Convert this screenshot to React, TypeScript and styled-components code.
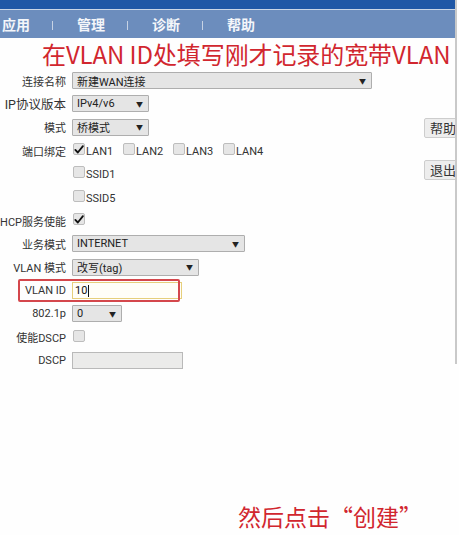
import React from "react";
import styled, { createGlobalStyle } from "styled-components";

const Global = createGlobalStyle`
  html, body { margin: 0; padding: 0; background: #fefefe; }
  body { font-family: "Roboto", "Noto Sans CJK SC", sans-serif; overflow: hidden; }
`;

const Page = styled.div`
  width: 459px;
  height: 535px;
  position: relative;
  overflow: hidden;
  background: #fefefe;
`;

const Frame = styled.div`
  width: 457px;
  height: 364px;
  box-sizing: border-box;
  border-right: 2px solid #c9c9c9;
  display: flex;
  flex-direction: column;
  & > * { flex-shrink: 0; }
`;

const TopStrip = styled.div`
  height: 9px;
  background: #1f57a6;
  border-bottom: 1px solid #c9d5e6;
`;

const Nav = styled.div`
  height: 28px;
  background: #6c8dbd;
  display: flex;
  align-items: center;
  padding-left: 2px;
`;

const NavItem = styled.span`
  font-family: "Noto Sans CJK SC", sans-serif;
  font-weight: 700;
  font-size: 14px;
  color: #f4f6fa;
  width: 28px;
  white-space: nowrap;
`;

const NavSep = styled.span`
  width: 1px;
  height: 9px;
  background: #c6d2e4;
  margin: 2px 24px 0 22px;
`;

const Caption = styled.div`
  height: 31px;
  line-height: 31px;
  padding-left: 42px;
  font-family: "Noto Sans CJK SC", sans-serif;
  font-size: 24px;
  color: #d1262e;
  white-space: nowrap;
  letter-spacing: -0.1px;
`;

const Body = styled.div`
  display: flex;
`;

const Form = styled.div`
  flex: 1;
  display: flex;
  flex-direction: column;
`;

const Row = styled.div`
  position: relative;
  height: 23.33px;
  flex: none;
  display: flex;
  align-items: center;
`;

const Label = styled.div<{ $size?: number }>`
  width: 66px;
  flex: none;
  display: flex;
  justify-content: flex-end;
  white-space: nowrap;
  font-size: ${(p) => p.$size ?? 11}px;
  color: #333;
  margin-right: 6px;
`;

const Select = styled.div<{ $w: number }>`
  width: ${(p) => p.$w}px;
  height: 17px;
  box-sizing: border-box;
  background: #e5e5e5;
  border: 1px solid #aeaeae;
  border-radius: 1px;
  display: flex;
  align-items: center;
  justify-content: space-between;
  padding: 0 5px 0 4px;
  font-size: 11px;
  color: #222;
`;

const Arrow = styled.span`
  font-size: 7px;
  color: #222;
`;

const TextBox = styled.div<{ $w: number; $focus?: boolean }>`
  width: ${(p) => p.$w}px;
  height: 17px;
  box-sizing: border-box;
  background: ${(p) => (p.$focus ? "#fffef8" : "#ebebea")};
  border: 1px solid ${(p) => (p.$focus ? "#e6cf7c" : "#b9b9b9")};
  display: flex;
  align-items: center;
  padding-left: 2px;
  font-size: 11px;
  color: #111;
`;

const Caret = styled.span`
  width: 1px;
  height: 12px;
  background: #111;
  margin-left: 0.5px;
`;

const Highlight = styled.div`
  position: absolute;
  left: 18px;
  top: 0;
  width: 162px;
  height: 23px;
  box-sizing: border-box;
  border: 2px solid #d4474c;
  border-radius: 2px;
  pointer-events: none;
`;

const Checks = styled.div`
  display: flex;
  align-items: center;
`;

const CheckItem = styled.div`
  width: 50px;
  display: flex;
  align-items: flex-end;
  font-size: 11px;
  color: #333;
`;

const Box = styled.span`
  width: 12px;
  height: 12px;
  box-sizing: border-box;
  background: #e6e6e6;
  border: 1px solid #bdbdbd;
  border-radius: 2px;
  display: inline-flex;
  align-items: center;
  justify-content: center;
  margin: 0 1px 3px 1px;
  flex: none;
`;

const Aside = styled.div`
  width: 31px;
  overflow: hidden;
  padding-top: 49px;
  display: flex;
  flex-direction: column;
  gap: 22px;
`;

const SideButton = styled.div`
  width: 40px;
  height: 20px;
  box-sizing: border-box;
  background: #ededed;
  border: 1px solid #cdcdcd;
  border-radius: 2px;
  font-family: "Noto Sans CJK SC", sans-serif;
  font-size: 13px;
  color: #333;
  line-height: 18px;
  padding-left: 5px;
  white-space: nowrap;
`;

const Footer = styled.div`
  padding: 137px 0 0 238px;
  font-family: "Noto Sans CJK SC", sans-serif;
  font-size: 23px;
  line-height: 30px;
  color: #d1262e;
  white-space: nowrap;
`;

const Check = () => (
  <svg width="11" height="11" viewBox="0 0 11 11">
    <path d="M1.5 6 L4.2 8.8 L9.8 1.8" fill="none" stroke="#111" strokeWidth="2" strokeLinecap="round" strokeLinejoin="round" />
  </svg>
);

const CheckBox = ({ checked }: { checked?: boolean }) => <Box>{checked ? <Check /> : null}</Box>;

const Sel = ({ w, children }: { w: number; children: React.ReactNode }) => (
  <Select $w={w}>
    <span>{children}</span>
    <Arrow>▼</Arrow>
  </Select>
);

export default function App() {
  return (
    <Page>
      <Global />
      <Frame>
        <TopStrip />
        <Nav>
          <NavItem>应用</NavItem>
          <NavSep />
          <NavItem>管理</NavItem>
          <NavSep />
          <NavItem>诊断</NavItem>
          <NavSep />
          <NavItem>帮助</NavItem>
        </Nav>
        <Caption>在VLAN ID处填写刚才记录的宽带VLAN</Caption>
        <Body>
          <Form>
            <Row>
              <Label>连接名称</Label>
              <Sel w={300}>新建WAN连接</Sel>
            </Row>
            <Row>
              <Label $size={12.5}>IP协议版本</Label>
              <Sel w={77}>IPv4/v6</Sel>
            </Row>
            <Row>
              <Label>模式</Label>
              <Sel w={77}>桥模式</Sel>
            </Row>
            <Row>
              <Label>端口绑定</Label>
              <Checks>
                <CheckItem><CheckBox checked />LAN1</CheckItem>
                <CheckItem><CheckBox />LAN2</CheckItem>
                <CheckItem><CheckBox />LAN3</CheckItem>
                <CheckItem><CheckBox />LAN4</CheckItem>
              </Checks>
            </Row>
            <Row>
              <Label />
              <CheckItem><CheckBox />SSID1</CheckItem>
            </Row>
            <Row>
              <Label />
              <CheckItem><CheckBox />SSID5</CheckItem>
            </Row>
            <Row>
              <Label>DHCP服务使能</Label>
              <CheckItem><CheckBox checked /></CheckItem>
            </Row>
            <Row>
              <Label>业务模式</Label>
              <Sel w={173}>INTERNET</Sel>
            </Row>
            <Row>
              <Label>VLAN 模式</Label>
              <Sel w={127}>改写(tag)</Sel>
            </Row>
            <Row>
              <Label>VLAN ID</Label>
              <TextBox $w={110} $focus>10<Caret /></TextBox>
              <Highlight />
            </Row>
            <Row>
              <Label>802.1p</Label>
              <Sel w={50}>0</Sel>
            </Row>
            <Row>
              <Label>使能DSCP</Label>
              <CheckItem><CheckBox /></CheckItem>
            </Row>
            <Row>
              <Label>DSCP</Label>
              <TextBox $w={111} />
            </Row>
          </Form>
          <Aside>
            <SideButton>帮助</SideButton>
            <SideButton>退出</SideButton>
          </Aside>
        </Body>
      </Frame>
      <Footer>然后点击“创建”</Footer>
    </Page>
  );
}
